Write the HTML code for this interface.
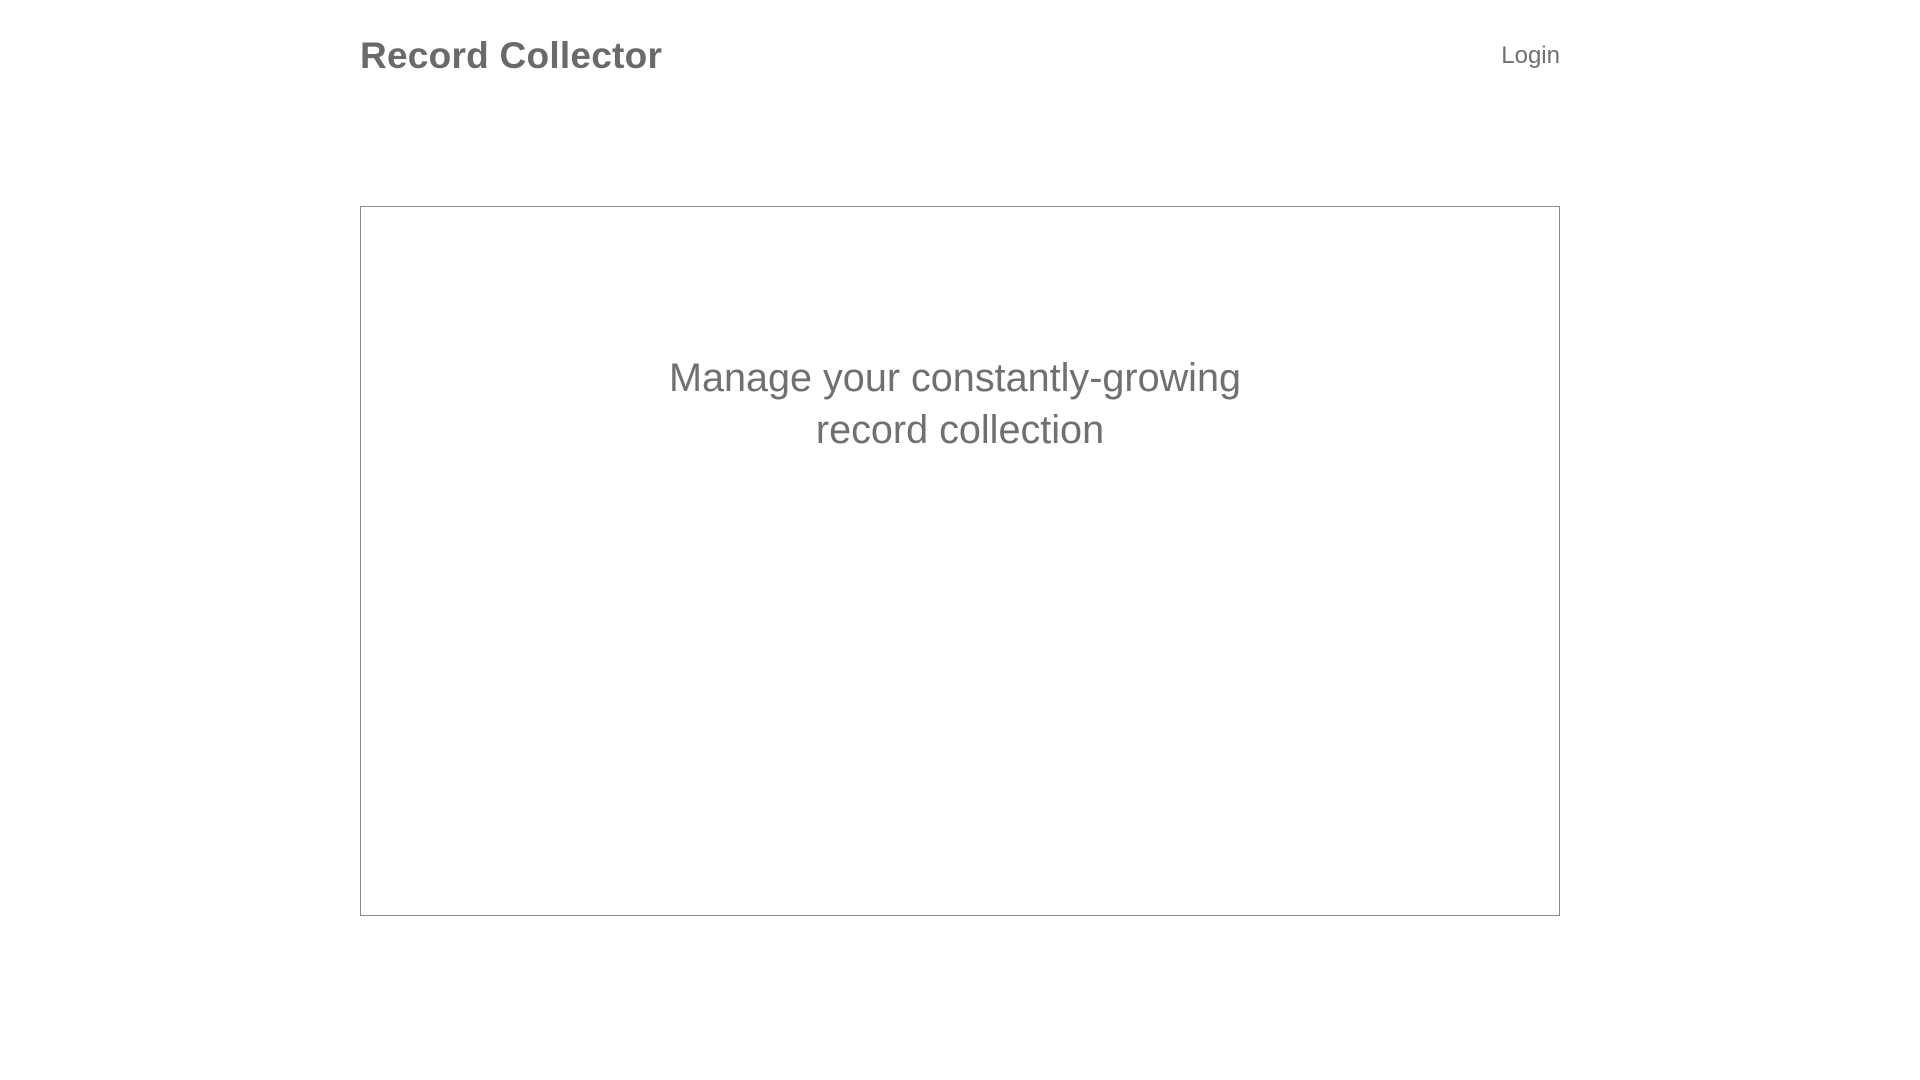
<!DOCTYPE html>
<html><head><meta charset="utf-8"><style>
html,body{margin:0;padding:0;background:#fff;width:1920px;height:1080px;overflow:hidden;font-family:"Liberation Sans",sans-serif;color:#6e6e6e}
.title{position:absolute;left:360px;top:35px;font-size:37px;font-weight:bold;letter-spacing:0.25px;color:#6a6a6a}
.login{position:absolute;right:360px;top:42px;font-size:24px;color:#707070}
.box{position:absolute;left:360px;top:206px;width:1198px;height:708px;border:1px solid #8a8a8a}
.h{position:absolute;left:0;right:0;text-align:center;font-size:39.6px;line-height:52px;color:#707070}
.l1{top:145px;left:-10px}
.l2{top:197px}
</style></head><body>
<div class="title">Record Collector</div>
<div class="login">Login</div>
<div class="box"><div class="h l1">Manage your constantly-growing</div><div class="h l2">record collection</div></div>
</body></html>
